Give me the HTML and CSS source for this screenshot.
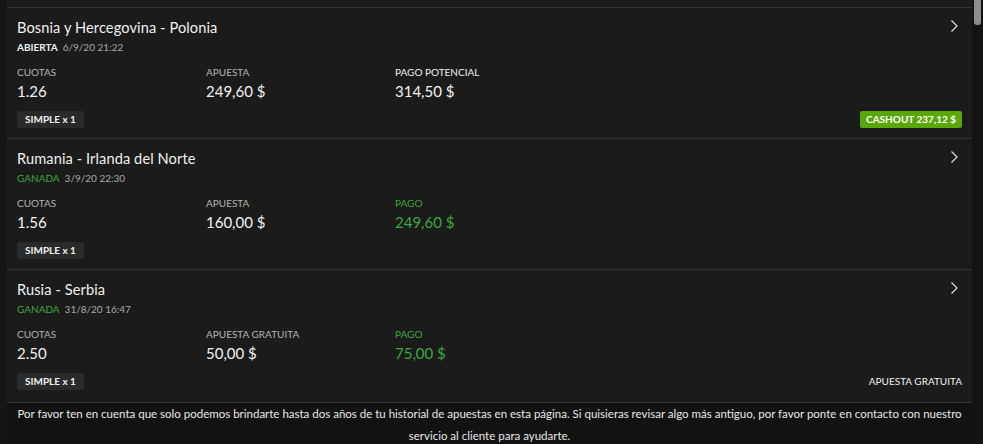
FILE: index.html
```html
<!DOCTYPE html>
<html lang="es">
<head>
    <meta charset="UTF-8">
    <meta name="viewport" content="width=device-width, initial-scale=1.0">
    <title>Historial de apuestas</title>
    <link rel="stylesheet" href="styles.css">
</head>
<body>
    <div class="edge"></div>

    <div class="main">
        <div class="panel">
            <div class="bet">
                <div class="bet-head">
                    <div class="bet-title">Bosnia y Hercegovina - Polonia</div>
                    <svg class="chevron" width="9" height="14" viewBox="0 0 9 14"><path d="M1.5 1.5 L7 7 L1.5 12.5" fill="none" stroke="#d8d8d8" stroke-width="1.3"/></svg>
                </div>
                <div class="bet-status"><span class="state open">ABIERTA</span>6/9/20 21:22</div>
                <div class="bet-stats">
                    <div class="stat">
                        <div class="stat-label">CUOTAS</div>
                        <div class="stat-value">1.26</div>
                    </div>
                    <div class="stat">
                        <div class="stat-label">APUESTA</div>
                        <div class="stat-value">249,60 $</div>
                    </div>
                    <div class="stat">
                        <div class="stat-label bright">PAGO POTENCIAL</div>
                        <div class="stat-value">314,50 $</div>
                    </div>
                </div>
                <div class="bet-foot">
                    <span class="tag">SIMPLE x 1</span>
                    <span class="cashout">CASHOUT 237,12 $</span>
                </div>
            </div>

            <div class="bet">
                <div class="bet-head">
                    <div class="bet-title">Rumania - Irlanda del Norte</div>
                    <svg class="chevron" width="9" height="14" viewBox="0 0 9 14"><path d="M1.5 1.5 L7 7 L1.5 12.5" fill="none" stroke="#d8d8d8" stroke-width="1.3"/></svg>
                </div>
                <div class="bet-status"><span class="state won">GANADA</span>3/9/20 22:30</div>
                <div class="bet-stats">
                    <div class="stat">
                        <div class="stat-label">CUOTAS</div>
                        <div class="stat-value">1.56</div>
                    </div>
                    <div class="stat">
                        <div class="stat-label">APUESTA</div>
                        <div class="stat-value">160,00 $</div>
                    </div>
                    <div class="stat won">
                        <div class="stat-label">PAGO</div>
                        <div class="stat-value">249,60 $</div>
                    </div>
                </div>
                <div class="bet-foot">
                    <span class="tag">SIMPLE x 1</span>
                </div>
            </div>

            <div class="bet">
                <div class="bet-head">
                    <div class="bet-title">Rusia - Serbia</div>
                    <svg class="chevron" width="9" height="14" viewBox="0 0 9 14"><path d="M1.5 1.5 L7 7 L1.5 12.5" fill="none" stroke="#d8d8d8" stroke-width="1.3"/></svg>
                </div>
                <div class="bet-status"><span class="state won">GANADA</span>31/8/20 16:47</div>
                <div class="bet-stats">
                    <div class="stat">
                        <div class="stat-label">CUOTAS</div>
                        <div class="stat-value">2.50</div>
                    </div>
                    <div class="stat">
                        <div class="stat-label">APUESTA GRATUITA</div>
                        <div class="stat-value">50,00 $</div>
                    </div>
                    <div class="stat won">
                        <div class="stat-label">PAGO</div>
                        <div class="stat-value">75,00 $</div>
                    </div>
                </div>
                <div class="bet-foot">
                    <span class="tag">SIMPLE x 1</span>
                    <span class="free">APUESTA GRATUITA</span>
                </div>
            </div>
        </div>

        <p class="note">Por favor ten en cuenta que solo podemos brindarte hasta dos años de tu historial de apuestas en esta página. Si quisieras revisar algo más antiguo, por favor ponte en contacto con nuestro servicio al cliente para ayudarte.</p>
    </div>

    <div class="scroll">
        <div class="scroll-thumb"></div>
    </div>
</body>
</html>
```

FILE: styles.css
```css
* {
    margin: 0;
    padding: 0;
    box-sizing: border-box;
}

body {
    font-family: Lato, "Open Sans", sans-serif;
    color: #ececec;
    background: #121212;
    height: 100vh;
    overflow: hidden;
    display: flex;
}

.edge {
    width: 7px;
    background: #151515;
}

.main {
    flex: 1;
    display: flex;
    flex-direction: column;
}

.panel {
    background: #1b1b1b;
    padding-top: 7px;
}

/* Tarjeta de apuesta */
.bet {
    border-top: 1px solid #343434;
    padding: 10px;
}

.bet:last-child {
    border-bottom: 1px solid #343434;
    padding-bottom: 12px;
}

.bet-head {
    display: flex;
    justify-content: space-between;
    align-items: flex-start;
}

.bet-title {
    font-size: 14.6px;
    line-height: 20px;
    color: #f0f0f0;
    letter-spacing: 0.1px;
}

.chevron {
    margin-top: 1px;
    margin-right: 3px;
}

.bet-status {
    margin-top: 2px;
    font-size: 10px;
    line-height: 14px;
    color: #a8a8a8;
}

.state {
    margin-right: 5px;
}

.state.open {
    color: #f0f0f0;
    font-weight: 700;
}

.state.won {
    color: #3ba73f;
}

.bet-stats {
    display: flex;
    margin-top: 11px;
}

.stat {
    width: 189px;
}

.stat-label {
    font-size: 10px;
    line-height: 14px;
    color: #b4b4b4;
}

.stat-label.bright {
    color: #f0f0f0;
}

.stat-value {
    margin-top: 2px;
    font-size: 15px;
    line-height: 20px;
    color: #f2f2f2;
}

.stat.won .stat-label,
.stat.won .stat-value {
    color: #3ba73f;
}

.bet-foot {
    margin-top: 10px;
    display: flex;
    justify-content: space-between;
    align-items: center;
    height: 17px;
}

.tag {
    background: #2a2a2a;
    border-radius: 2px;
    font-size: 10px;
    font-weight: 700;
    line-height: 17px;
    padding: 0 8px;
    color: #f0f0f0;
}

.cashout {
    background: #5aa70a;
    border-radius: 2px;
    font-size: 10px;
    font-weight: 700;
    line-height: 17px;
    padding: 0 6px;
    color: #fff;
}

.free {
    font-size: 10px;
    line-height: 17px;
    color: #f0f0f0;
}

.note {
    text-align: center;
    font-size: 11.5px;
    line-height: 22px;
    color: #e8e8e8;
    padding: 0 10px;
}

/* Barra de desplazamiento */
.scroll {
    width: 11px;
    background: #131313;
    padding: 0 2px;
}

.scroll-thumb {
    height: 25px;
    background: #8d8d8d;
    border-radius: 0 0 3px 3px;
}
```
